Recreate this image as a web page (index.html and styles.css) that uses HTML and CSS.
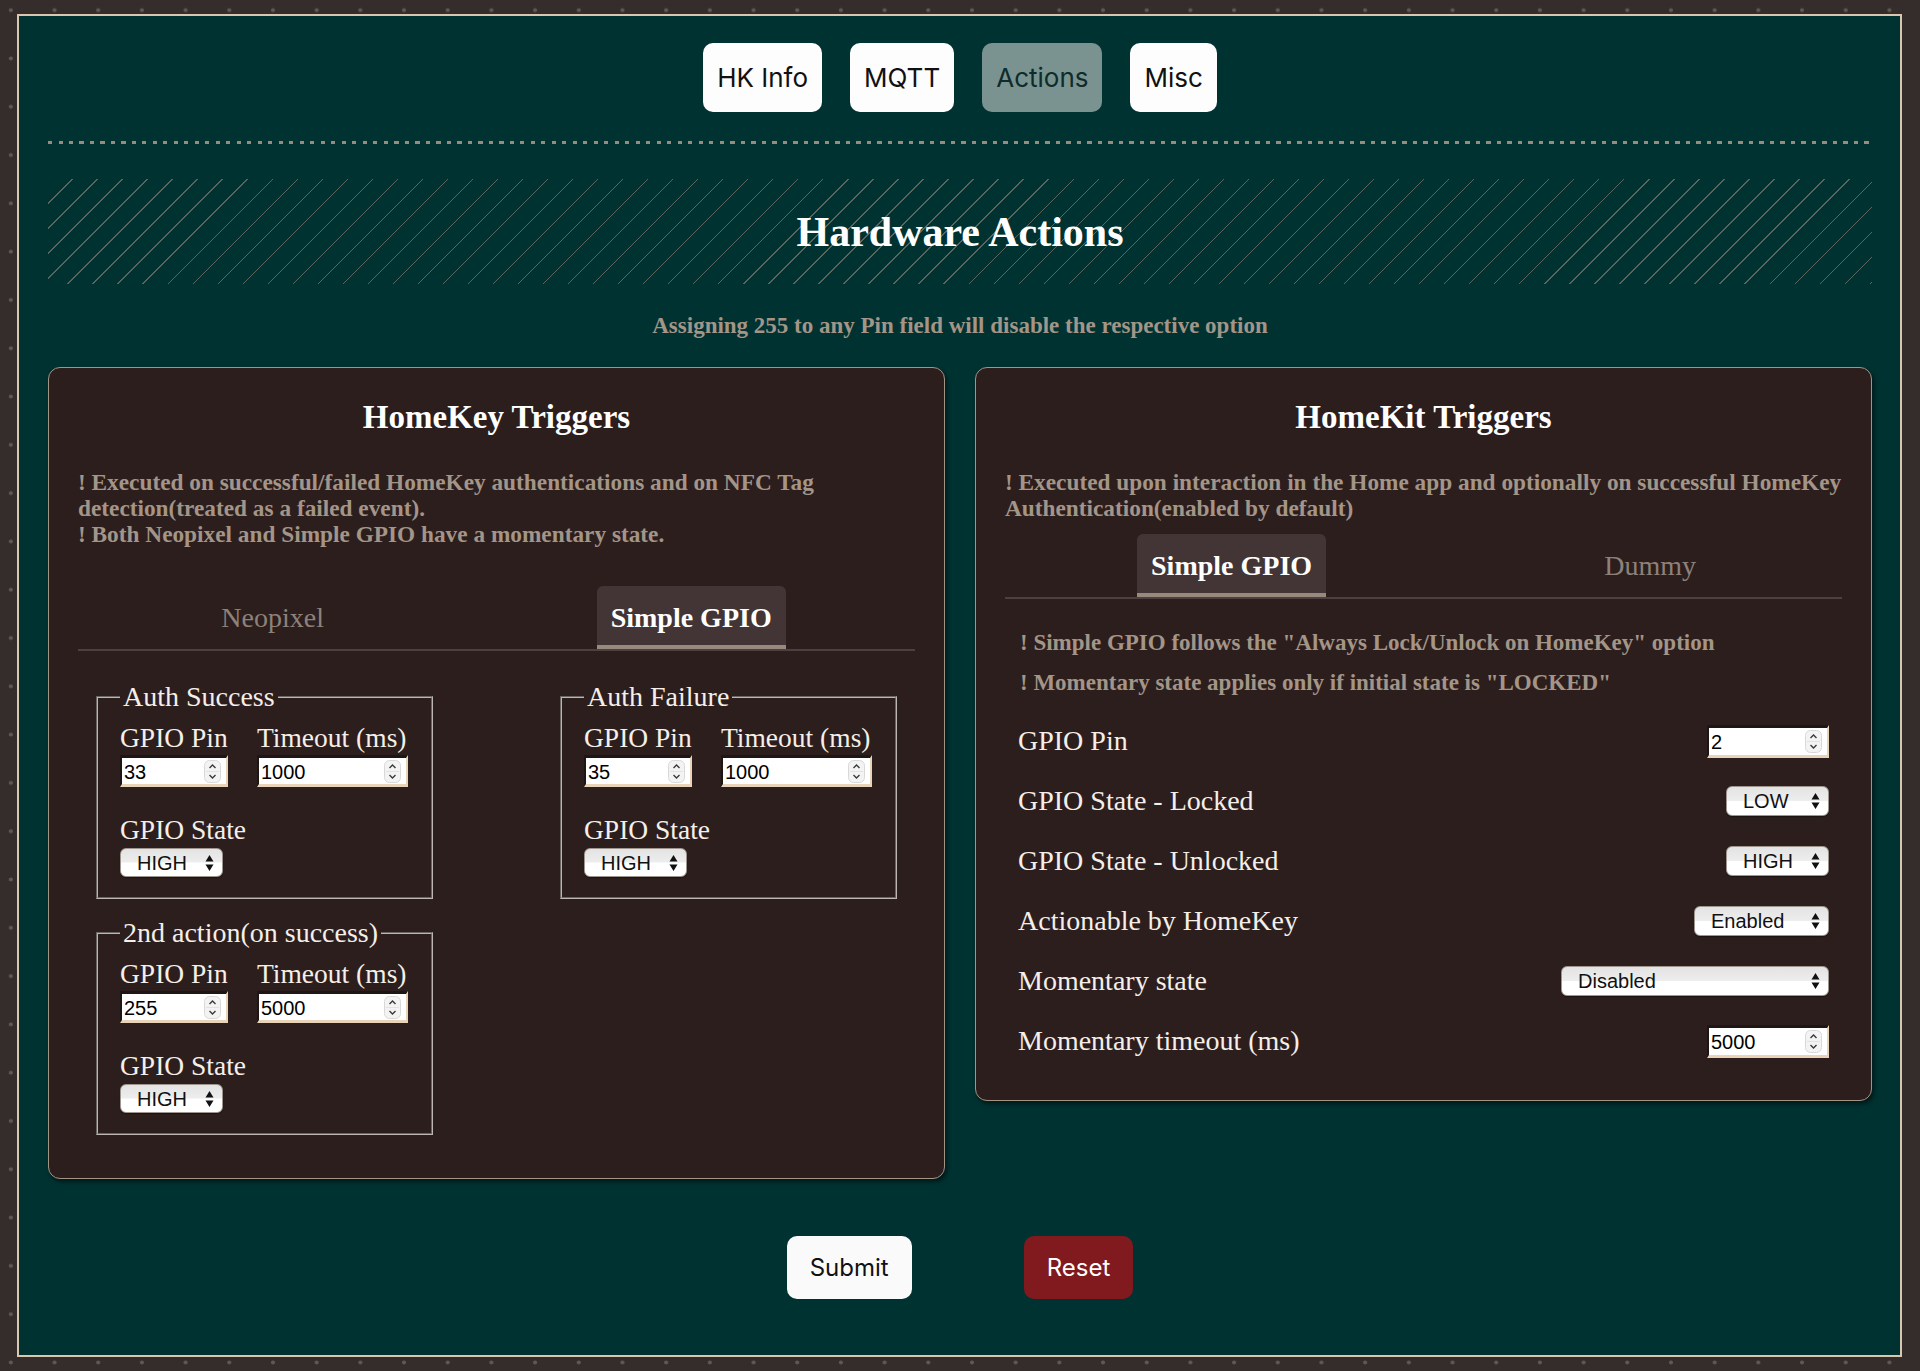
FILE: index.html
```html
<!DOCTYPE html>
<html>
  <head>
    <title>Hardware Actions</title>
    <meta charset="UTF-8">
    <link rel="stylesheet" href="styles.css">
  </head>

  <body>
    <div class="page">
      <nav class="nav">
        <button type="button" class="nav-btn">HK Info</button>
        <button type="button" class="nav-btn">MQTT</button>
        <button type="button" class="nav-btn active">Actions</button>
        <button type="button" class="nav-btn">Misc</button>
      </nav>
      <div class="divider"></div>

      <div class="banner"><h1>Hardware Actions</h1></div>
      <p class="hint">Assigning 255 to any Pin field will disable the respective option</p>

      <form class="cards">
        <section class="card">
          <h2>HomeKey Triggers</h2>
          <p class="note note-long">! Executed on successful/failed HomeKey authentications and on NFC Tag detection(treated as a failed event).<br>! Both Neopixel and Simple GPIO have a momentary state.</p>
          <div class="tabs">
            <span class="tab">Neopixel</span>
            <span class="tab active">Simple GPIO</span>
          </div>
          <div class="groups">
            <fieldset>
              <legend>Auth Success</legend>
              <div class="pair">
                <div class="field">
                  <span>GPIO Pin</span>
                  <span class="num w-pin"><input type="number" value="33"><svg class="spin" viewBox="0 0 17 23" width="17" height="23"><rect x="0.5" y="0.5" width="16" height="22" rx="5" fill="#f3f3f3" stroke="#d8d8d8"/><path d="M2 11.5h13" stroke="#e2e2e2"/><path d="M5.5 8l3-3 3 3M5.5 15l3 3 3-3" fill="none" stroke="#3a3a3a" stroke-width="1.4"/></svg></span>
                </div>
                <div class="field">
                  <span>Timeout (ms)</span>
                  <span class="num w-time"><input type="number" value="1000"><svg class="spin" viewBox="0 0 17 23" width="17" height="23"><rect x="0.5" y="0.5" width="16" height="22" rx="5" fill="#f3f3f3" stroke="#d8d8d8"/><path d="M2 11.5h13" stroke="#e2e2e2"/><path d="M5.5 8l3-3 3 3M5.5 15l3 3 3-3" fill="none" stroke="#3a3a3a" stroke-width="1.4"/></svg></span>
                </div>
              </div>
              <div class="field state">
                <span>GPIO State</span>
                <span class="pick w-state"><select><option>HIGH</option><option>LOW</option></select><svg class="updown" viewBox="0 0 9 18" width="9" height="18"><path d="M4.5 1l4 6.5h-8zM4.5 17l-4-6.5h8z" fill="#111"/></svg></span>
              </div>
            </fieldset>

            <fieldset>
              <legend>Auth Failure</legend>
              <div class="pair">
                <div class="field">
                  <span>GPIO Pin</span>
                  <span class="num w-pin"><input type="number" value="35"><svg class="spin" viewBox="0 0 17 23" width="17" height="23"><rect x="0.5" y="0.5" width="16" height="22" rx="5" fill="#f3f3f3" stroke="#d8d8d8"/><path d="M2 11.5h13" stroke="#e2e2e2"/><path d="M5.5 8l3-3 3 3M5.5 15l3 3 3-3" fill="none" stroke="#3a3a3a" stroke-width="1.4"/></svg></span>
                </div>
                <div class="field">
                  <span>Timeout (ms)</span>
                  <span class="num w-time"><input type="number" value="1000"><svg class="spin" viewBox="0 0 17 23" width="17" height="23"><rect x="0.5" y="0.5" width="16" height="22" rx="5" fill="#f3f3f3" stroke="#d8d8d8"/><path d="M2 11.5h13" stroke="#e2e2e2"/><path d="M5.5 8l3-3 3 3M5.5 15l3 3 3-3" fill="none" stroke="#3a3a3a" stroke-width="1.4"/></svg></span>
                </div>
              </div>
              <div class="field state">
                <span>GPIO State</span>
                <span class="pick w-state"><select><option>HIGH</option><option>LOW</option></select><svg class="updown" viewBox="0 0 9 18" width="9" height="18"><path d="M4.5 1l4 6.5h-8zM4.5 17l-4-6.5h8z" fill="#111"/></svg></span>
              </div>
            </fieldset>

            <fieldset>
              <legend>2nd action(on success)</legend>
              <div class="pair">
                <div class="field">
                  <span>GPIO Pin</span>
                  <span class="num w-pin"><input type="number" value="255"><svg class="spin" viewBox="0 0 17 23" width="17" height="23"><rect x="0.5" y="0.5" width="16" height="22" rx="5" fill="#f3f3f3" stroke="#d8d8d8"/><path d="M2 11.5h13" stroke="#e2e2e2"/><path d="M5.5 8l3-3 3 3M5.5 15l3 3 3-3" fill="none" stroke="#3a3a3a" stroke-width="1.4"/></svg></span>
                </div>
                <div class="field">
                  <span>Timeout (ms)</span>
                  <span class="num w-time"><input type="number" value="5000"><svg class="spin" viewBox="0 0 17 23" width="17" height="23"><rect x="0.5" y="0.5" width="16" height="22" rx="5" fill="#f3f3f3" stroke="#d8d8d8"/><path d="M2 11.5h13" stroke="#e2e2e2"/><path d="M5.5 8l3-3 3 3M5.5 15l3 3 3-3" fill="none" stroke="#3a3a3a" stroke-width="1.4"/></svg></span>
                </div>
              </div>
              <div class="field state">
                <span>GPIO State</span>
                <span class="pick w-state"><select><option>HIGH</option><option>LOW</option></select><svg class="updown" viewBox="0 0 9 18" width="9" height="18"><path d="M4.5 1l4 6.5h-8zM4.5 17l-4-6.5h8z" fill="#111"/></svg></span>
              </div>
            </fieldset>
          </div>
        </section>

        <section class="card">
          <h2>HomeKit Triggers</h2>
          <p class="note">! Executed upon interaction in the Home app and optionally on successful HomeKey Authentication(enabled by default)</p>
          <div class="tabs">
            <span class="tab active">Simple GPIO</span>
            <span class="tab">Dummy</span>
          </div>
          <div class="notes">
            <p>! Simple GPIO follows the "Always Lock/Unlock on HomeKey" option</p>
            <p>! Momentary state applies only if initial state is "LOCKED"</p>
          </div>
          <div class="rows">
            <div class="row">
              <span>GPIO Pin</span>
              <span class="num w-row"><input type="number" value="2"><svg class="spin" viewBox="0 0 17 23" width="17" height="23"><rect x="0.5" y="0.5" width="16" height="22" rx="5" fill="#f3f3f3" stroke="#d8d8d8"/><path d="M2 11.5h13" stroke="#e2e2e2"/><path d="M5.5 8l3-3 3 3M5.5 15l3 3 3-3" fill="none" stroke="#3a3a3a" stroke-width="1.4"/></svg></span>
            </div>
            <div class="row">
              <span>GPIO State - Locked</span>
              <span class="pick w-state"><select><option>LOW</option><option>HIGH</option></select><svg class="updown" viewBox="0 0 9 18" width="9" height="18"><path d="M4.5 1l4 6.5h-8zM4.5 17l-4-6.5h8z" fill="#111"/></svg></span>
            </div>
            <div class="row">
              <span>GPIO State - Unlocked</span>
              <span class="pick w-state"><select><option>HIGH</option><option>LOW</option></select><svg class="updown" viewBox="0 0 9 18" width="9" height="18"><path d="M4.5 1l4 6.5h-8zM4.5 17l-4-6.5h8z" fill="#111"/></svg></span>
            </div>
            <div class="row">
              <span>Actionable by HomeKey</span>
              <span class="pick w-enabled"><select><option>Enabled</option><option>Disabled</option></select><svg class="updown" viewBox="0 0 9 18" width="9" height="18"><path d="M4.5 1l4 6.5h-8zM4.5 17l-4-6.5h8z" fill="#111"/></svg></span>
            </div>
            <div class="row">
              <span>Momentary state</span>
              <span class="pick w-wide"><select><option>Disabled</option><option>Enabled</option></select><svg class="updown" viewBox="0 0 9 18" width="9" height="18"><path d="M4.5 1l4 6.5h-8zM4.5 17l-4-6.5h8z" fill="#111"/></svg></span>
            </div>
            <div class="row">
              <span>Momentary timeout (ms)</span>
              <span class="num w-row"><input type="number" value="5000"><svg class="spin" viewBox="0 0 17 23" width="17" height="23"><rect x="0.5" y="0.5" width="16" height="22" rx="5" fill="#f3f3f3" stroke="#d8d8d8"/><path d="M2 11.5h13" stroke="#e2e2e2"/><path d="M5.5 8l3-3 3 3M5.5 15l3 3 3-3" fill="none" stroke="#3a3a3a" stroke-width="1.4"/></svg></span>
            </div>
          </div>
        </section>
      </form>

      <div class="actions">
        <button type="button" class="submit">Submit</button>
        <button type="button" class="reset">Reset</button>
      </div>
    </div>
  </body>
</html>
```

FILE: styles.css
```css
body {
  margin: 0;
  padding: 14px 18px 14px 17px;
  background-color: #352d2c;
  background-image: radial-gradient(circle, #5f5857 1.6px, transparent 2.3px);
  background-size: 43.7px 48.3px;
  background-position: -11px -14px;
  font-family: "Liberation Serif", "Times New Roman", serif;
  color: #f4efe9;
}

.page {
  box-sizing: border-box;
  min-height: calc(100vh - 28px);
  border: 2px solid #d9c7b1;
  background-color: #003232;
  padding: 27px 28px 40px 29px;
}

/* top navigation */
.nav {
  display: flex;
  justify-content: center;
  gap: 28px;
}

.nav-btn {
  height: 69px;
  padding: 0 14px;
  border: none;
  border-radius: 10px;
  background-color: #fdfdfd;
  color: #111;
  font-family: Inter, "Liberation Sans", sans-serif;
  font-size: 26px;
  cursor: pointer;
}

.nav-btn.active {
  background-color: #7b9390;
  color: #0f2b2a;
}

.divider {
  height: 3px;
  margin-top: 29px;
  background: repeating-linear-gradient(90deg, #978b7b 0 4px, transparent 4px 10.5px);
}

.banner {
  height: 105px;
  margin-top: 35px;
  display: flex;
  align-items: center;
  justify-content: center;
  background: repeating-linear-gradient(135deg, transparent 0 16.8px, rgba(150, 137, 122, 0.6) 16.8px 17.7px);
}

h1 {
  margin: 0;
  font-size: 42px;
  color: #fff;
}

.hint {
  margin: 29px 0 0;
  text-align: center;
  font-size: 23px;
  font-weight: bold;
  line-height: 26px;
  color: #a39587;
}

/* cards */
.cards {
  display: flex;
  align-items: flex-start;
  gap: 30px;
  margin-top: 28px;
}

.card {
  flex: 1;
  background-color: #2d1e1e;
  border: 1px solid #a39584;
  border-radius: 12px;
  padding: 29px;
  box-shadow: 2px 3px 4px rgba(0, 0, 0, 0.5);
}

h2 {
  margin: 0;
  font-size: 33px;
  line-height: 40px;
  text-align: center;
  color: #fff;
}

.note {
  margin: 32px 0 13px;
  font-size: 23.3px;
  font-weight: bold;
  line-height: 26px;
  color: #a39587;
}

.note-long {
  margin-bottom: 39px;
}

.tabs {
  display: flex;
  justify-content: space-around;
  border-bottom: 2px solid #4d403e;
}

.tab {
  height: 63px;
  padding: 0 14px;
  display: flex;
  align-items: center;
  font-size: 28px;
  color: #8d827a;
}

.tab.active {
  background-color: #433535;
  border-radius: 6px 6px 0 0;
  box-shadow: inset 0 -4px 0 #978a7c;
  font-weight: bold;
  color: #fff;
}

/* homekey groups */
.groups {
  display: flex;
  flex-wrap: wrap;
  justify-content: space-between;
  row-gap: 19px;
  padding: 0 18px;
  margin: 31px 0 14px;
}

fieldset {
  box-sizing: border-box;
  width: 337px;
  margin: 0;
  padding: 11px 22px 20px;
  border: 2px groove #bdb7b1;
}

legend {
  padding: 0 3px;
  font-size: 28px;
  line-height: 30px;
  white-space: nowrap;
}

.pair {
  display: flex;
  gap: 29px;
}

.field {
  display: flex;
  flex-direction: column;
  align-items: flex-start;
  gap: 2px;
  font-size: 27.5px;
  line-height: 30px;
  white-space: nowrap;
}

.field.state {
  margin-top: 28px;
  gap: 3px;
}

/* number boxes */
.num {
  box-sizing: border-box;
  display: inline-flex;
  align-items: center;
  height: 32px;
  padding-right: 5px;
  background-color: #fff;
  border-style: solid;
  border-width: 3px 2px 3px 2px;
  border-color: #1d1615 #e9d3b9 #e9d3b9 #1d1615;
}

.num input {
  flex: 1;
  min-width: 0;
  padding: 2px 2px 0;
  border: none;
  outline: none;
  background: transparent;
  font-family: "Liberation Sans", Arial, sans-serif;
  font-size: 20px;
  color: #000;
  -moz-appearance: textfield;
}

.num input::-webkit-inner-spin-button,
.num input::-webkit-outer-spin-button {
  -webkit-appearance: none;
  margin: 0;
}

.spin {
  flex: none;
}

.w-pin { width: 108px; }
.w-time { width: 151px; }
.w-row { width: 122px; }

/* selects */
.pick {
  box-sizing: border-box;
  display: inline-flex;
  align-items: center;
  height: 29px;
  padding: 0 8px 0 16px;
  border: 1px solid #9d958e;
  border-radius: 6px;
  background: linear-gradient(#e3e3e3, #ededed 48%, #fff 52%, #fff);
  box-shadow: 0 1px 1px rgba(0, 0, 0, 0.4);
}

.pick select {
  flex: 1;
  min-width: 0;
  padding: 0;
  border: none;
  outline: none;
  background: transparent;
  -webkit-appearance: none;
  appearance: none;
  font-family: "Liberation Sans", Arial, sans-serif;
  font-size: 20px;
  color: #111;
}

.updown {
  flex: none;
}

.w-state { width: 103px; }
.w-enabled { width: 135px; }
.w-wide { width: 268px; }

/* homekit rows */
.notes {
  padding-left: 15px;
  font-size: 23px;
  font-weight: bold;
  line-height: 26px;
  color: #a39587;
}

.notes p {
  margin: 31px 0 0;
}

.notes p + p {
  margin-top: 14px;
}

.rows {
  margin-top: 15px;
}

.row {
  height: 60px;
  padding: 0 13px;
  display: flex;
  align-items: center;
  justify-content: space-between;
  font-size: 28px;
}

.row .pick {
  height: 30px;
}

.row .num {
  height: 33px;
}

/* bottom buttons */
.actions {
  display: flex;
  justify-content: center;
  gap: 112px;
  margin-top: 57px;
}

.actions button {
  height: 63px;
  padding: 0 23px;
  border: none;
  border-radius: 10px;
  font-family: Inter, "Liberation Sans", sans-serif;
  font-size: 24px;
  cursor: pointer;
}

.submit {
  background-color: #fafafa;
  color: #111;
}

.reset {
  background-color: #811a1e;
  color: #fff;
}
```
